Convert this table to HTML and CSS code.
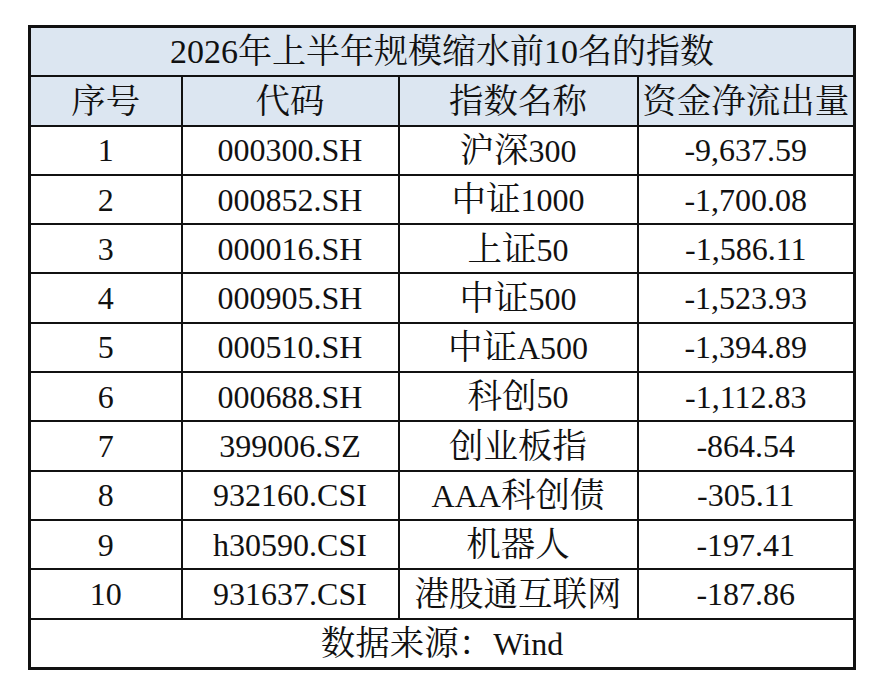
FILE: index.html
```html
<!DOCTYPE html>
<html lang="zh-CN">
<head>
<meta charset="utf-8">
<title>2026年上半年规模缩水前10名的指数</title>
<link rel="stylesheet" href="styles.css">
</head>
<body>
<table class="tbl">
  <colgroup>
    <col class="c1"><col class="c2"><col class="c3"><col class="c4">
  </colgroup>
  <tr class="title"><td colspan="4">2026年上半年规模缩水前10名的指数</td></tr>
  <tr class="head"><td>序号</td><td>代码</td><td>指数名称</td><td>资金净流出量</td></tr>
  <tr><td>1</td><td>000300.SH</td><td><span class="zh">沪深</span>300</td><td>-9,637.59</td></tr>
  <tr><td>2</td><td>000852.SH</td><td><span class="zh">中证</span>1000</td><td>-1,700.08</td></tr>
  <tr><td>3</td><td>000016.SH</td><td><span class="zh">上证</span>50</td><td>-1,586.11</td></tr>
  <tr><td>4</td><td>000905.SH</td><td><span class="zh">中证</span>500</td><td>-1,523.93</td></tr>
  <tr><td>5</td><td>000510.SH</td><td><span class="zh">中证</span>A500</td><td>-1,394.89</td></tr>
  <tr><td>6</td><td>000688.SH</td><td><span class="zh">科创</span>50</td><td>-1,112.83</td></tr>
  <tr><td>7</td><td>399006.SZ</td><td><span class="zh">创业板指</span></td><td>-864.54</td></tr>
  <tr><td>8</td><td>932160.CSI</td><td>AAA<span class="zh">科创债</span></td><td>-305.11</td></tr>
  <tr><td>9</td><td>h30590.CSI</td><td><span class="zh">机器人</span></td><td>-197.41</td></tr>
  <tr><td>10</td><td>931637.CSI</td><td><span class="zh">港股通互联网</span></td><td>-187.86</td></tr>
  <tr class="foot"><td colspan="4"><span class="zh">数据来源：</span>Wind</td></tr>
</table>
</body>
</html>
```
FILE: styles.css
```css
html, body {
  margin: 0;
  padding: 0;
  background: #ffffff;
}
body {
  padding: 25px 0 0 28px;
}
.tbl {
  border-collapse: collapse;
  table-layout: fixed;
  width: 825px;
  border: 3px solid #111;
  font-family: "Liberation Serif", "Noto Serif CJK SC", "Noto Sans CJK SC", serif;
  font-size: 32px;
  color: #111;
}
.c1 { width: 152px; }
.c2 { width: 217px; }
.c3 { width: 239px; }
.c4 { width: 217px; }
.tbl td {
  border: 2px solid #111;
  height: 47.3px;
  padding: 0;
  text-align: center;
  vertical-align: middle;
  line-height: 1;
  white-space: nowrap;
  overflow: hidden;
}
.title td, .head td {
  background: #dce6f1;
}
.title td {
  font-size: 34px;
}
.head td {
  font-size: 34.5px;
}
.zh {
  font-size: 34.5px;
}
```
